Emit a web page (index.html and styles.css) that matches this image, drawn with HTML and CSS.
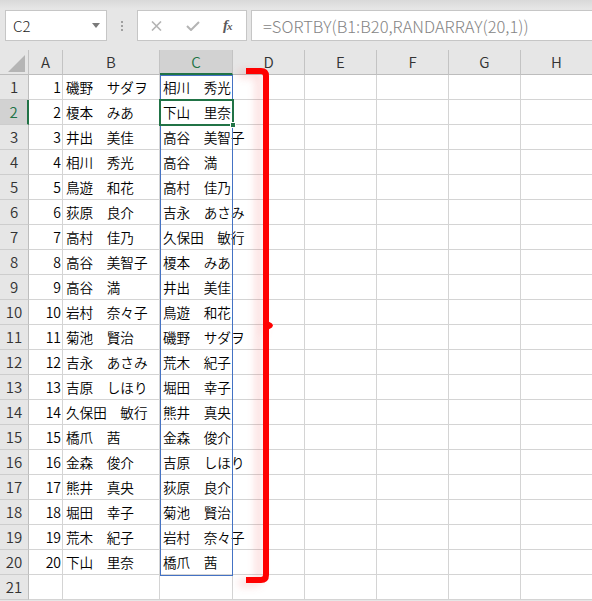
FILE: index.html
```html
<!DOCTYPE html>
<html lang="ja">
<head>
<meta charset="utf-8">
<title>SORTBY</title>
<link rel="stylesheet" href="styles.css">
</head>
<body>
<div class="app">
  <div class="topbar">
    <div class="namebox"><span>C2</span><span class="caret"></span></div>
    <div class="grip"><i></i><i></i><i></i></div>
    <div class="fxbox">
      <svg class="ico-x" width="11" height="10" viewBox="0 0 11 10"><path d="M1 0.5 L10 9.5 M10 0.5 L1 9.5" stroke="#b4b4b4" stroke-width="1.6" fill="none"/></svg>
      <svg class="ico-ok" width="14" height="10" viewBox="0 0 14 10"><path d="M1 5 L5 9 L13 1" stroke="#b4b4b4" stroke-width="2" fill="none"/></svg>
      <span class="fx">f<span class="fxs">x</span></span>
    </div>
    <div class="formula">=SORTBY(B1:B20,RANDARRAY(20,1))</div>
  </div>
  <div class="sheet">
    <div class="corner"><span class="tri"></span></div><div class="ch">A</div><div class="ch">B</div><div class="ch sel">C</div><div class="ch">D</div><div class="ch">E</div><div class="ch">F</div><div class="ch">G</div><div class="ch">H</div>

    <div class="rh">1</div><div class="n">1</div><div>磯野　サダヲ</div><div>相川　秀光</div><div></div><div></div><div></div><div></div><div></div>
    <div class="rh sel">2</div><div class="n">2</div><div>榎本　みあ</div><div>下山　里奈</div><div></div><div></div><div></div><div></div><div></div>
    <div class="rh">3</div><div class="n">3</div><div>井出　美佳</div><div>高谷　美智子</div><div></div><div></div><div></div><div></div><div></div>
    <div class="rh">4</div><div class="n">4</div><div>相川　秀光</div><div>高谷　満</div><div></div><div></div><div></div><div></div><div></div>
    <div class="rh">5</div><div class="n">5</div><div>鳥遊　和花</div><div>高村　佳乃</div><div></div><div></div><div></div><div></div><div></div>
    <div class="rh">6</div><div class="n">6</div><div>荻原　良介</div><div>吉永　あさみ</div><div></div><div></div><div></div><div></div><div></div>
    <div class="rh">7</div><div class="n">7</div><div>高村　佳乃</div><div>久保田　敏行</div><div></div><div></div><div></div><div></div><div></div>
    <div class="rh">8</div><div class="n">8</div><div>高谷　美智子</div><div>榎本　みあ</div><div></div><div></div><div></div><div></div><div></div>
    <div class="rh">9</div><div class="n">9</div><div>高谷　満</div><div>井出　美佳</div><div></div><div></div><div></div><div></div><div></div>
    <div class="rh">10</div><div class="n">10</div><div>岩村　奈々子</div><div>鳥遊　和花</div><div></div><div></div><div></div><div></div><div></div>
    <div class="rh">11</div><div class="n">11</div><div>菊池　賢治</div><div>磯野　サダヲ</div><div></div><div></div><div></div><div></div><div></div>
    <div class="rh">12</div><div class="n">12</div><div>吉永　あさみ</div><div>荒木　紀子</div><div></div><div></div><div></div><div></div><div></div>
    <div class="rh">13</div><div class="n">13</div><div>吉原　しほり</div><div>堀田　幸子</div><div></div><div></div><div></div><div></div><div></div>
    <div class="rh">14</div><div class="n">14</div><div>久保田　敏行</div><div>熊井　真央</div><div></div><div></div><div></div><div></div><div></div>
    <div class="rh">15</div><div class="n">15</div><div>橋爪　茜</div><div>金森　俊介</div><div></div><div></div><div></div><div></div><div></div>
    <div class="rh">16</div><div class="n">16</div><div>金森　俊介</div><div>吉原　しほり</div><div></div><div></div><div></div><div></div><div></div>
    <div class="rh">17</div><div class="n">17</div><div>熊井　真央</div><div>荻原　良介</div><div></div><div></div><div></div><div></div><div></div>
    <div class="rh">18</div><div class="n">18</div><div>堀田　幸子</div><div>菊池　賢治</div><div></div><div></div><div></div><div></div><div></div>
    <div class="rh">19</div><div class="n">19</div><div>荒木　紀子</div><div>岩村　奈々子</div><div></div><div></div><div></div><div></div><div></div>
    <div class="rh">20</div><div class="n">20</div><div>下山　里奈</div><div>橋爪　茜</div><div></div><div></div><div></div><div></div><div></div>
    <div class="rh">21</div><div></div><div></div><div></div><div></div><div></div><div></div><div></div><div></div>
  </div>

  <div class="spill"></div>
  <div class="selbox"></div>
  <div class="handle"></div>
  <svg class="bracket" width="592" height="601" viewBox="0 0 592 601">
    <path d="M246 71 H261 Q266 71 266 76 V575 Q266 580 261 580 H246" stroke="#ff0000" stroke-width="6" fill="none"/>
    <path d="M266 320 L272 323.5 L273 325.5 L272 327.5 L266 331 Z" fill="#ff0000"/>
  </svg>
</div>
</body>
</html>
```

FILE: styles.css
```css
* { box-sizing: border-box; }
html, body { margin: 0; padding: 0; }
body {
  background: #e6e6e6;
  font-family: "Noto Sans CJK JP", "Noto Sans", sans-serif;
}
.app {
  position: relative;
  width: 592px;
  height: 601px;
  overflow: hidden;
  background: #e6e6e6;
}
.topbar {
  height: 50px;
  padding-top: 10px;
  display: flex;
  align-items: flex-start;
  background: linear-gradient(#d9d9d9 0, #e6e6e6 9px);
}
.namebox {
  margin-left: 5px;
  width: 102px;
  height: 31px;
  background: #fff;
  border: 1px solid #c6c6c6;
  display: flex;
  align-items: center;
  justify-content: space-between;
  padding: 0 6px 0 7px;
  font-size: 15px;
  font-weight: 300;
  color: #222;
}
.caret {
  width: 0;
  height: 0;
  border-left: 4px solid transparent;
  border-right: 4px solid transparent;
  border-top: 5px solid #7a7a7a;
}
.grip {
  width: 30px;
  height: 31px;
  display: flex;
  flex-direction: column;
  align-items: center;
  justify-content: center;
  gap: 2px;
}
.grip i {
  display: block;
  width: 2px;
  height: 2px;
  background: #a0a0a0;
}
.fxbox {
  width: 110px;
  height: 31px;
  background: #fff;
  border: 1px solid #c6c6c6;
  display: flex;
  align-items: center;
  padding-left: 13px;
}
.ico-x { margin-right: 24px; }
.ico-ok { margin-right: 23px; }
.fx {
  font-family: "Liberation Serif", serif;
  font-style: italic;
  font-weight: bold;
  font-size: 15px;
  color: #5a5a5a;
  letter-spacing: -1px;
}
.fxs { font-size: 11px; }
.formula {
  flex: 1;
  height: 31px;
  margin-left: 4px;
  margin-right: -2px;
  background: #fff;
  border: 1px solid #c6c6c6;
  padding-left: 11px;
  display: flex;
  align-items: center;
  font-size: 16.5px;
  font-weight: 300;
  color: #858585;
  white-space: nowrap;
}
.sheet {
  display: grid;
  grid-template-columns: 29px 34px 97px 73px 72px 72px 72px 72px 72px;
  grid-auto-rows: 25px;
  background: #fff;
}
.sheet > div {
  border-right: 1px solid #d4d4d4;
  border-bottom: 1px solid #d4d4d4;
  font-size: 13.6px;
  font-weight: 350;
  line-height: 24px;
  white-space: nowrap;
  padding-left: 3px;
  color: #000;
}
.sheet > .n {
  text-align: right;
  padding-right: 1px;
  font-size: 14px;
}
.sheet > .ch {
  background: #e6e6e6;
  border-right-color: #c3c3c3;
  border-bottom-color: #bdbdbd;
  text-align: center;
  font-size: 15px;
  color: #333;
  padding-left: 0;
}
.sheet > .corner {
  background: #e6e6e6;
  border-right-color: #c3c3c3;
  border-bottom-color: #bdbdbd;
  display: flex;
  align-items: flex-end;
  justify-content: flex-end;
  padding: 0 3px 2px 0;
}
.tri {
  width: 0;
  height: 0;
  border-left: 17px solid transparent;
  border-bottom: 17px solid #b5b5b5;
}
.sheet > .rh {
  background: #e6e6e6;
  border-right-color: #bdbdbd;
  border-bottom-color: #cdcdcd;
  text-align: center;
  font-size: 15px;
  color: #333;
  padding-left: 0;
}
.sheet > .ch.sel {
  background: #d2d2d2;
  border-bottom: 2px solid #217346;
  color: #217346;
}
.sheet > .rh.sel {
  background: #d2d2d2;
  border-right: 2px solid #217346;
  color: #217346;
}
.spill {
  position: absolute;
  left: 160px;
  top: 75px;
  width: 73px;
  height: 501px;
  border: 1px solid #4472c4;
}
.selbox {
  position: absolute;
  left: 159px;
  top: 99px;
  width: 75px;
  height: 27px;
  border: 2px solid #217346;
}
.handle {
  position: absolute;
  left: 230px;
  top: 122px;
  width: 6px;
  height: 6px;
  background: #217346;
  border: 1px solid #fff;
}
.bracket {
  position: absolute;
  left: 0;
  top: 0;
  pointer-events: none;
  filter: drop-shadow(-7px 3px 4px rgba(230, 60, 60, 0.22));
}
```
